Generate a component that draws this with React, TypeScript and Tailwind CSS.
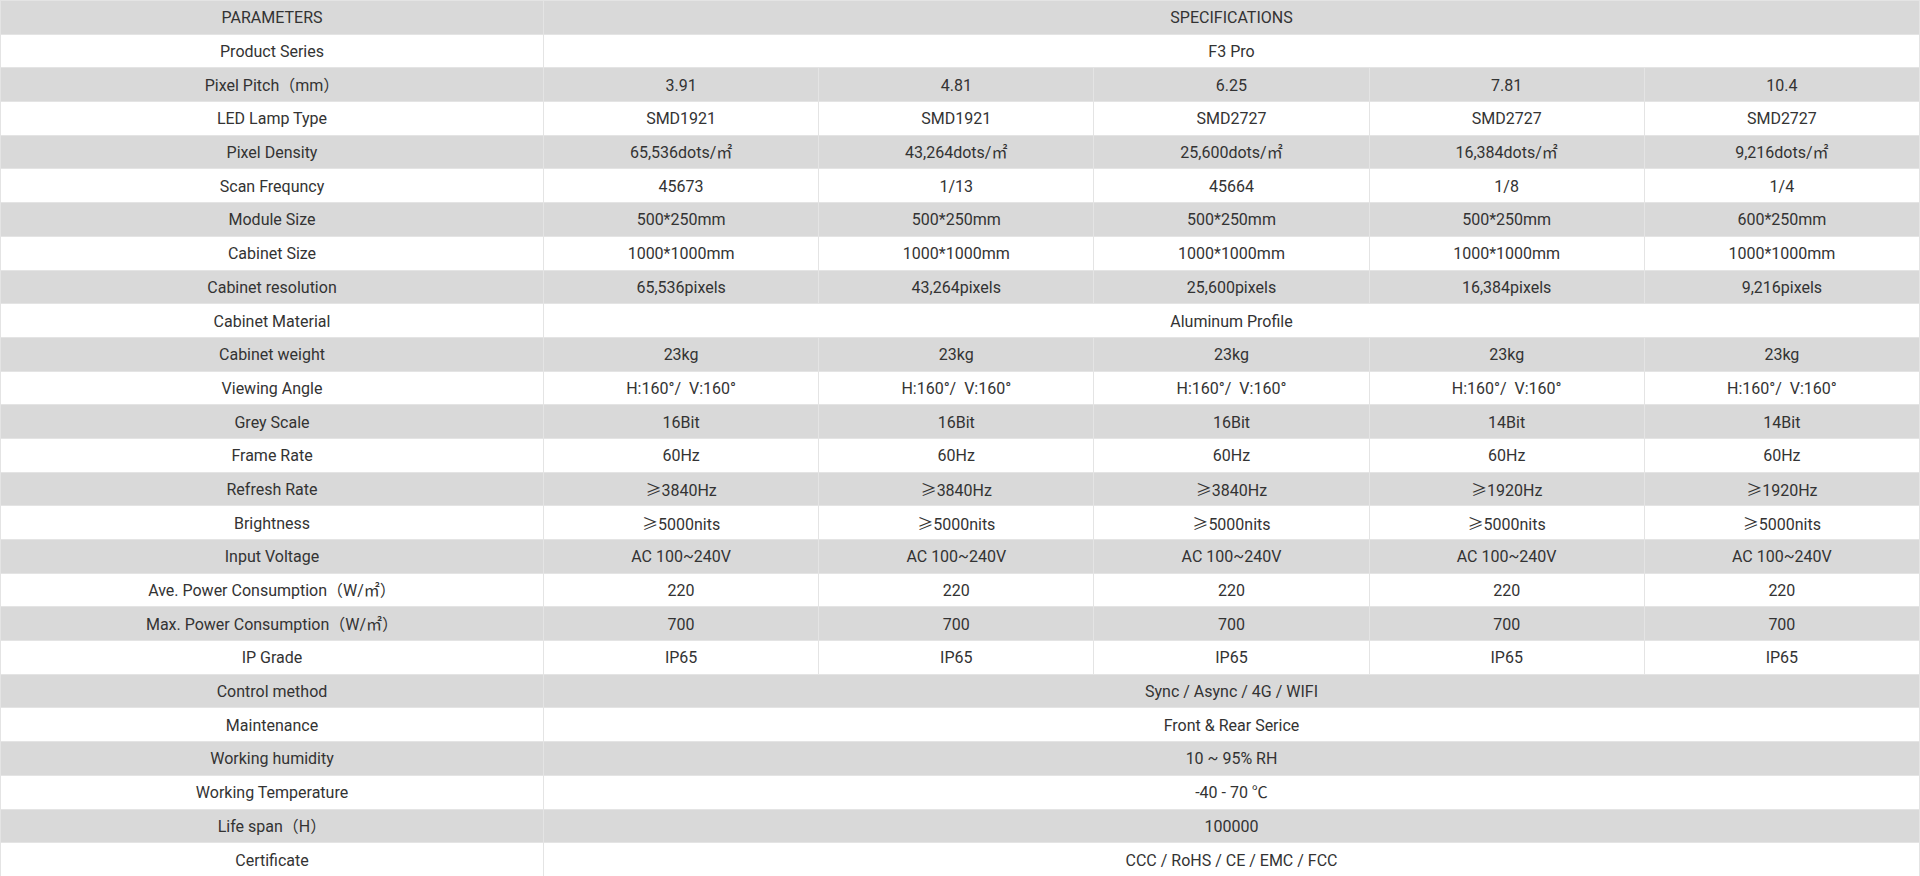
import React from "react";

type Row = { label: string; values: string[] | string; gray: boolean };

const labels: [string, string[] | string][] = [
  ["PARAMETERS", "SPECIFICATIONS"],
  ["Product Series", "F3 Pro"],
  ["Pixel Pitch（mm）", ["3.91", "4.81", "6.25", "7.81", "10.4"]],
  ["LED Lamp Type", ["SMD1921", "SMD1921", "SMD2727", "SMD2727", "SMD2727"]],
  ["Pixel Density", ["65,536dots/㎡", "43,264dots/㎡", "25,600dots/㎡", "16,384dots/㎡", "9,216dots/㎡"]],
  ["Scan Frequncy", ["45673", "1/13", "45664", "1/8", "1/4"]],
  ["Module Size", ["500*250mm", "500*250mm", "500*250mm", "500*250mm", "600*250mm"]],
  ["Cabinet Size", ["1000*1000mm", "1000*1000mm", "1000*1000mm", "1000*1000mm", "1000*1000mm"]],
  ["Cabinet resolution", ["65,536pixels", "43,264pixels", "25,600pixels", "16,384pixels", "9,216pixels"]],
  ["Cabinet Material", "Aluminum Profile"],
  ["Cabinet weight", ["23kg", "23kg", "23kg", "23kg", "23kg"]],
  ["Viewing Angle", ["H:160°/  V:160°", "H:160°/  V:160°", "H:160°/  V:160°", "H:160°/  V:160°", "H:160°/  V:160°"]],
  ["Grey Scale", ["16Bit", "16Bit", "16Bit", "14Bit", "14Bit"]],
  ["Frame Rate", ["60Hz", "60Hz", "60Hz", "60Hz", "60Hz"]],
  ["Refresh Rate", ["≥3840Hz", "≥3840Hz", "≥3840Hz", "≥1920Hz", "≥1920Hz"]],
  ["Brightness", ["≥5000nits", "≥5000nits", "≥5000nits", "≥5000nits", "≥5000nits"]],
  ["Input Voltage", ["AC 100~240V", "AC 100~240V", "AC 100~240V", "AC 100~240V", "AC 100~240V"]],
  ["Ave. Power Consumption（W/㎡）", ["220", "220", "220", "220", "220"]],
  ["Max. Power Consumption（W/㎡）", ["700", "700", "700", "700", "700"]],
  ["IP Grade", ["IP65", "IP65", "IP65", "IP65", "IP65"]],
  ["Control method", "Sync / Async / 4G / WIFI"],
  ["Maintenance", "Front & Rear Serice"],
  ["Working humidity", "10 ~ 95% RH"],
  ["Working Temperature", "-40 - 70 ℃"],
  ["Life span（H）", "100000"],
  ["Certificate", "CCC / RoHS / CE / EMC / FCC"],
];

const rows: Row[] = labels.map(([label, values], i) => ({ label, values, gray: i % 2 === 0 }));

function Txt({ s }: { s: string }) {
  if (s.startsWith("≥")) {
    return (
      <>
        <span style={{ fontFamily: '"Noto Sans CJK SC", sans-serif' }}>≥</span>
        {s.slice(1)}
      </>
    );
  }
  return <>{s}</>;
}

const cell = "border border-[#e4e4e4] p-0 pt-[2px] text-center leading-none whitespace-pre";

export default function App() {
  return (
    <div
      className="w-[1920px] h-[876px] overflow-hidden bg-white text-[#333333] text-[16px]"
      style={{ fontFamily: 'Roboto, "Noto Sans CJK SC", sans-serif' }}
    >
      <table className="w-[1920px] table-fixed border-collapse">
        <colgroup>
          <col className="w-[543px]" />
          <col />
          <col />
          <col />
          <col />
          <col />
        </colgroup>
        <tbody>
          {rows.map((r, i) => (
            <tr key={i} className={`h-[33.69px] ${r.gray ? "bg-[#d9d9d9]" : "bg-white"}`}>
              <td className={cell}>{r.label}</td>
              {typeof r.values === "string" ? (
                <td colSpan={5} className={cell}>
                  <Txt s={r.values} />
                </td>
              ) : (
                r.values.map((v, j) => (
                  <td key={j} className={cell}>
                    <Txt s={v} />
                  </td>
                ))
              )}
            </tr>
          ))}
        </tbody>
      </table>
    </div>
  );
}
